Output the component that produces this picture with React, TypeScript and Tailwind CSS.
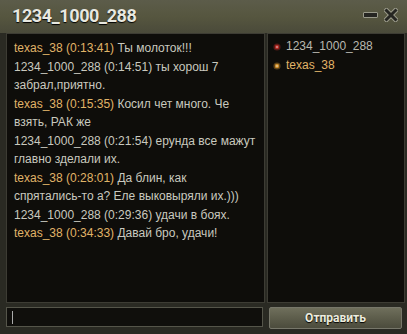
const messages = [
    { name: "texas_38", time: "0:13:41", text: "Ты молоток!!!", me: false },
    { name: "1234_1000_288", time: "0:14:51", text: "ты хорош 7 забрал,приятно.", me: true },
    { name: "texas_38", time: "0:15:35", text: "Косил чет много. Че взять, РАК же", me: false },
    { name: "1234_1000_288", time: "0:21:54", text: "ерунда все мажут главно зделали их.", me: true },
    { name: "texas_38", time: "0:28:01", text: "Да блин, как спрятались-то а? Еле выковыряли их.)))", me: false },
    { name: "1234_1000_288", time: "0:29:36", text: "удачи в боях.", me: true },
    { name: "texas_38", time: "0:34:33", text: "Давай бро, удачи!", me: false },
]

function Dot({ color }: { color: string }) {
    return (
        <svg width="8" height="8" viewBox="0 0 8 8" className="shrink-0">
            <circle cx="4" cy="4" r="3.6" fill={color} opacity="0.35" />
            <circle cx="4" cy="4" r="2.2" fill={color} opacity="0.8" />
            <circle cx="4" cy="4" r="1" fill="#fff" opacity="0.5" />
        </svg>
    )
}

// flash-style wrap: words break only at spaces, never at hyphens
function Words({ text }: { text: string }) {
    return (
        <>
            {text.split(" ").map((w, i) => (
                <span key={i}>
                    <span className="whitespace-nowrap">{w}</span>{" "}
                </span>
            ))}
        </>
    )
}

export default function App() {
    return (
        <div className="flex h-[334px] w-[407px] flex-col bg-[#2a2a23] font-['Liberation_Sans',sans-serif]">
            <div className="flex h-[33px] shrink-0 items-center justify-between bg-gradient-to-b from-[#5c5c4a] via-[#56563f] to-[#4a4a3a] pl-[12px] pr-[9px]">
                <span className="mt-[-3px] font-['Roboto',sans-serif] text-[18px] font-bold tracking-[-0.4px] text-[#e8e8e0] [text-shadow:0_1px_1px_#000]">
                    1234_1000_288
                </span>
                <div className="mt-[-3px] flex items-center gap-[6px]">
                    <div className="h-[6px] w-[15px] rounded-[1px] border border-[#9a9a8a] bg-[#262622]" />
                    <svg width="14" height="14" viewBox="0 0 14 14">
                        <path d="M2.5 2.5 L11.5 11.5 M11.5 2.5 L2.5 11.5" stroke="#9a9a8a" strokeWidth="5" strokeLinecap="square" />
                        <path d="M2.5 2.5 L11.5 11.5 M11.5 2.5 L2.5 11.5" stroke="#262622" strokeWidth="3" strokeLinecap="square" />
                    </svg>
                </div>
            </div>
            <div className="flex min-h-0 flex-1 gap-[2px] pl-[6px] pr-[2px]">
                <div className="w-[259px] border border-[#3d3c34] bg-[#0e0d0a] pl-[7px] pr-[1px] pt-[5px] text-[12px] leading-[18.5px] text-[#c9c9bf]">
                    {messages.map((m, i) => (
                        <p key={i}>
                            <span className={m.me ? "text-[#c9c9bf]" : "text-[#e0b468]"}>
                                {m.name} ({m.time})
                            </span>{" "}
                            <Words text={m.text} />
                        </p>
                    ))}
                </div>
                <div className="flex flex-1 flex-col border border-[#3d3c34] bg-[#0e0d0a] px-[5px] pt-[3px] text-[12px] leading-[19px]">
                    <div className="flex items-center gap-[5px] text-[#b9b9b0]">
                        <Dot color="#d0302a" />
                        1234_1000_288
                    </div>
                    <div className="flex items-center gap-[5px] text-[#e0b468]">
                        <Dot color="#e8a030" />
                        texas_38
                    </div>
                </div>
            </div>
            <div className="flex h-[31px] shrink-0 items-start gap-[6px] pl-[6px] pr-[5px] pt-[4px]">
                <div className="flex h-[20px] w-[257px] items-center border border-[#55554a] bg-[#100f0c] pl-[5px]">
                    <div className="h-[13px] w-[1px] bg-[#aaa]" />
                </div>
                <div className="flex h-[22px] flex-1 items-center justify-center rounded-[2px] border border-[#77776a] bg-gradient-to-b from-[#6f6f5c] via-[#5d5d4b] to-[#4c4c3d] font-['Roboto',sans-serif] text-[12px] font-bold text-[#ececdf] [text-shadow:0_1px_1px_#000]">
                    Отправить
                </div>
            </div>
        </div>
    )
}
